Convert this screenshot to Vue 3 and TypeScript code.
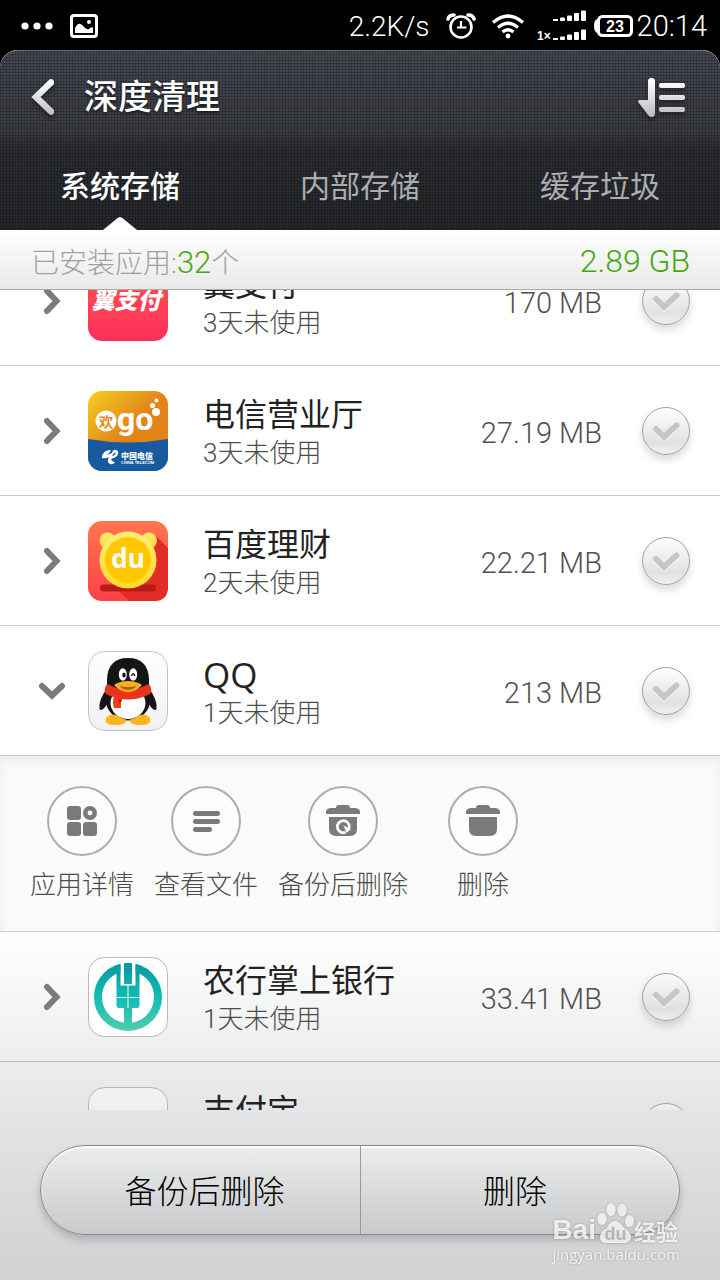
<script setup lang="ts">
import { onMounted, ref } from 'vue'

interface AppEntry {
  id: string
  name: string
  idle: string
  size: string
  open: boolean
  selected: boolean
}

const tabs = ['系统存储', '内部存储', '缓存垃圾']
const activeTab = ref(0)

const apps = ref<AppEntry[]>([
  { id: 'yipay', name: '翼支付', idle: '3天未使用', size: '170 MB', open: false, selected: false },
  { id: 'telecom', name: '电信营业厅', idle: '3天未使用', size: '27.19 MB', open: false, selected: false },
  { id: 'licai', name: '百度理财', idle: '2天未使用', size: '22.21 MB', open: false, selected: false },
  { id: 'qq', name: 'QQ', idle: '1天未使用', size: '213 MB', open: true, selected: false },
  { id: 'abc', name: '农行掌上银行', idle: '1天未使用', size: '33.41 MB', open: false, selected: false },
  { id: 'alipay', name: '支付宝', idle: '', size: '', open: false, selected: false },
])

const actions = [
  { id: 'details', label: '应用详情' },
  { id: 'files', label: '查看文件' },
  { id: 'backup', label: '备份后删除' },
  { id: 'remove', label: '删除' },
]

const list = ref<HTMLElement | null>(null)

const isLatin = (text: string) => /^[A-Za-z]+$/.test(text)

onMounted(() => {
  if (list.value) list.value.scrollTop = 54
})
</script>

<template>
  <div class="screen">
    <div class="status">
      <svg class="dots" width="34" height="10" viewBox="0 0 34 10" fill="#fff">
        <circle cx="5" cy="5" r="3.6" /><circle cx="17" cy="5" r="3.6" /><circle cx="29" cy="5" r="3.6" />
      </svg>
      <svg class="photo" width="28" height="24" viewBox="0 0 28 24">
        <rect x="1.5" y="1.5" width="25" height="21" rx="2.5" fill="none" stroke="#fff" stroke-width="3" />
        <path d="M5 19V14Q9 6 14 13Q17 16 19 15Q21 12.500 23 13.500V19Z" fill="#fff" />
        <circle cx="19" cy="8" r="2" fill="#fff" />
      </svg>
      <span class="speed">2.2K/s</span>
      <svg class="alarm" width="30" height="26" viewBox="0 0 30 26" fill="none" stroke="#fff">
        <circle cx="15" cy="14" r="10.500" stroke-width="2.600" />
        <path d="M15 8V14.500H20.500M11 14.500H15" stroke-width="2.200" />
        <path d="M2 6Q3 2 8 2M22 2Q27 2 28 6" stroke-width="3.600" stroke-linecap="round" />
      </svg>
      <svg class="wifi" width="34" height="26" viewBox="0 0 34 26" fill="none" stroke="#fff" stroke-width="3.400">
        <path d="M2 9.500Q17 -3.500 32 9.500" /><path d="M7 14.500Q17 6 27 14.500" /><path d="M11.500 19Q17 14.500 22.500 19" />
        <circle cx="17" cy="23" r="2.400" fill="#fff" stroke="none" />
      </svg>
      <svg class="signal" width="50" height="32" viewBox="0 0 50 32" fill="#fff">
        <text x="0" y="30" class="onex">1×</text>
        <g id="bars">
          <rect x="16" y="9" width="5" height="2" /><rect x="23" y="7.500" width="5" height="3.500" rx="1" />
          <rect x="30" y="5.500" width="5" height="5.500" rx="1" /><rect x="37" y="3" width="5" height="8" rx="1" />
          <rect x="44" y="0.500" width="5" height="10.500" rx="1" />
        </g>
        <use href="#bars" y="19" />
      </svg>
      <svg class="battery" width="39" height="22" viewBox="0 0 39 22">
        <path d="M4 4Q0 4 0 11T4 18Z" fill="#fff" />
        <rect x="4.500" y="1.500" width="33" height="19" rx="4" fill="none" stroke="#fff" stroke-width="3" />
        <text x="21" y="16.500" text-anchor="middle" class="level">23</text>
      </svg>
      <span class="clock">20:14</span>
    </div>

    <header class="header">
      <div class="titlebar">
        <button class="icon-btn" type="button" aria-label="返回">
          <svg width="24" height="38" viewBox="0 0 24 38">
            <defs>
              <linearGradient id="metal" x1="0" y1="0" x2="0" y2="38" gradientUnits="userSpaceOnUse">
                <stop offset="0.1" stop-color="#fff" /><stop offset="1" stop-color="#bcbdc0" />
              </linearGradient>
            </defs>
            <path d="M21 4.500L6 19L21 33.500" fill="none" stroke="url(#metal)" stroke-width="6.500" stroke-linecap="round" />
          </svg>
        </button>
        <h1>深度清理</h1>
        <button class="icon-btn sort" type="button" aria-label="排序">
          <svg width="48" height="40" viewBox="0 0 48 40" fill="url(#metal)">
            <path d="M10 4Q10 1 13.500 1T17 4V36Q17 40 13.500 40Q11.500 40 10 38L0.500 25.500Q-0.500 23 2 23H10Z" />
            <rect x="21" y="6" width="26" height="5" rx="2" /><rect x="21" y="18" width="26" height="5" rx="2" />
            <rect x="21" y="30" width="26" height="5" rx="2" />
          </svg>
        </button>
      </div>
      <nav class="tabs">
        <button
          v-for="(tab, i) in tabs"
          :key="tab"
          type="button"
          class="tab"
          :class="{ active: i === activeTab }"
          @click="activeTab = i"
        >{{ tab }}</button>
      </nav>
    </header>

    <div class="summary">
      <span>已安装应用:<b>32</b>个</span>
      <b class="total">2.89 GB</b>
    </div>

    <ul ref="list" class="list">
      <li v-for="app in apps" :key="app.id">
        <div class="row">
          <button class="expand" type="button" :aria-label="'展开' + app.name" :aria-expanded="app.open" @click="app.open = !app.open">
            <svg v-if="app.open" width="28" height="28" viewBox="0 0 28 28"><path d="M4 9L14 18.500L24 9" class="chev" /></svg>
            <svg v-else width="28" height="28" viewBox="0 0 28 28"><path d="M9 4L18.500 14L9 24" class="chev" /></svg>
          </button>

          <svg class="app-icon" width="80" height="80" viewBox="0 0 80 80">
            <g v-if="app.id === 'yipay'">
              <linearGradient id="yi" x2="0" y2="1"><stop stop-color="#ff5a4c" /><stop offset="1" stop-color="#ff2f5c" /></linearGradient>
              <rect width="80" height="80" rx="14" fill="url(#yi)" />
              <text x="38" y="48" text-anchor="middle" class="yi-text">翼支付</text>
            </g>
            <g v-else-if="app.id === 'telecom'">
              <linearGradient id="tel" x2="0.5" y2="0.5"><stop stop-color="#f6cf20" /><stop offset="1" stop-color="#e38418" /></linearGradient>
              <clipPath id="round"><rect width="80" height="80" rx="14" /></clipPath>
              <g clip-path="url(#round)">
                <rect width="80" height="80" fill="url(#tel)" />
                <path d="M0 48Q40 55 80 48V80H0Z" fill="#175a9f" />
              </g>
              <circle cx="18" cy="30" r="10.500" fill="#fff" />
              <text x="18" y="35.500" text-anchor="middle" class="huan">欢</text>
              <text x="29" y="39" class="go">go</text>
              <g fill="#fff"><circle cx="68" cy="21" r="4" /><circle cx="64.500" cy="14.500" r="2.600" /><circle cx="68.500" cy="9.500" r="2" /></g>
              <path d="M14 67Q14 59 23 59Q22 62 17 65Q20 63 24 62Q25 58 28 59Q32 60 29 65Q27 67 23 68Q24 71 27 71Q25 74 22 73Q18 71 21 66Q17 68 14 67Z" fill="#fff" />
              <path d="M24 65Q28 64 27.500 61.500Q25 62 24 65Z" fill="#175a9f" />
              <text x="33" y="67.500" class="cn">中国电信</text>
              <text x="33" y="73" class="en">CHINA TELECOM</text>
            </g>
            <g v-else-if="app.id === 'licai'">
              <linearGradient id="lc" x2="0" y2="1"><stop stop-color="#ff774e" /><stop offset="1" stop-color="#fd4148" /></linearGradient>
              <linearGradient id="bear" x2="0" y2="1"><stop stop-color="#ffeb78" /><stop offset="1" stop-color="#ffd92a" /></linearGradient>
              <rect width="80" height="80" rx="14" fill="url(#lc)" />
              <path d="M67 14L80 27V66Q80 80 66 80H41L23 62Z" fill="#e32c26" />
              <rect x="12" y="63.500" width="56" height="7" rx="3.500" fill="#b51c17" />
              <g fill="url(#bear)"><circle cx="19.500" cy="19.500" r="8" /><circle cx="61" cy="19.500" r="8" /><circle cx="40" cy="39" r="28.500" /></g>
              <circle cx="40" cy="39" r="23" fill="#ffc800" />
              <text x="40" y="47" text-anchor="middle" class="du">du</text>
            </g>
            <g v-else-if="app.id === 'qq'">
              <linearGradient id="qqbg" x2="0" y2="1"><stop stop-color="#fff" /><stop offset="1" stop-color="#f1f1f2" /></linearGradient>
              <rect x="0.500" y="0.500" width="79" height="79" rx="16" fill="url(#qqbg)" stroke="#c2c2c4" />
              <path d="M20 36Q10 49 11.500 58Q13 61 18 55L22 44ZM60 36Q70 49 68.500 58Q67 61 62 55L58 44Z" fill="#151515" />
              <ellipse cx="40" cy="48" rx="22.500" ry="21.500" fill="#151515" />
              <path d="M19 38V28Q20 7 40 7T61 28V38Z" fill="#151515" />
              <ellipse cx="40" cy="52" rx="17.500" ry="16" fill="#fff" />
              <path d="M18 67Q22 62 28 64Q34 68 39 69Q38 74 27 74Q16 74 18 67ZM62 67Q58 62 52 64Q46 68 41 69Q42 74 53 74Q64 74 62 67Z" fill="#fbb41a" />
              <path d="M19 33Q40 44 61 33Q65 39 62 43Q40 54 18 43Q15 39 19 33Z" fill="#e8351a" />
              <path d="M26 45L34 48Q32 52 33 57L26 57Q24 51 26 45Z" fill="#ef3a1c" /><path d="M30 48L34 49Q32 52 32 54Z" fill="#b32410" />
              <ellipse cx="34.800" cy="23.500" rx="4" ry="6.200" fill="#fff" /><ellipse cx="45.200" cy="23.500" rx="4" ry="6.200" fill="#fff" />
              <ellipse cx="36" cy="24" rx="1.700" ry="2.500" fill="#151515" />
              <path d="M43.500 25Q45 20.500 47 25" fill="none" stroke="#151515" stroke-width="1.300" />
              <path d="M26 34Q32 30 40 30T54 34Q48 41 40 41T26 34Z" fill="#fdb01e" />
              <path d="M31 34.500Q40 38 49 34.500Q45 39 40 39T31 34.500Z" fill="#b05a12" />
            </g>
            <g v-else-if="app.id === 'abc'">
              <linearGradient id="ab" x1="0" y1="6" x2="0" y2="74" gradientUnits="userSpaceOnUse"><stop stop-color="#0b979f" /><stop offset="0.5" stop-color="#10bdb4" /><stop offset="1" stop-color="#4fcbb2" /></linearGradient>
              <rect x="0.500" y="0.500" width="79" height="79" rx="16" fill="#fff" stroke="#b8b8ba" />
              <circle cx="40" cy="40" r="30" fill="none" stroke="url(#ab)" stroke-width="8" />
              <path d="M32.500 4H47.500V30H32.500Z" fill="#fff" />
              <g fill="url(#ab)">
                <rect x="36" y="6" width="8" height="21" rx="1" />
                <path d="M28.500 9L32.500 8V28.500H47.500V8L51.500 9V49Q51.500 51 49 51H44V70H36V51H31Q28.500 51 28.500 49Z" />
              </g>
              <path d="M28.500 40.500H51.500M40 28V51" stroke="#d8f4ef" stroke-width="1.200" />
            </g>
            <rect v-else x="0.500" y="0.500" width="79" height="79" rx="16" fill="#f0f0f1" stroke="#b4b5b8" />
          </svg>

          <div class="info">
            <div class="name" :class="{ latin: isLatin(app.name) }">{{ app.name }}</div>
            <div class="idle">{{ app.idle }}</div>
          </div>
          <span class="size">{{ app.size }}</span>
          <label class="pick">
            <input v-model="app.selected" type="checkbox" :aria-label="'选择' + app.name" />
            <svg width="48" height="48" viewBox="0 0 48 48" fill="none" stroke-width="6" stroke-linecap="round">
              <path d="M14 23L22 31L34.500 19.500" stroke="#fff" />
              <path class="tick" d="M14 22L22 30L34.500 18.500" />
            </svg>
          </label>
        </div>

        <div v-if="app.open" class="panel">
          <button v-for="a in actions" :key="a.id" type="button" class="action">
            <svg class="ring" width="70" height="70" viewBox="0 0 70 70" fill="#7a7a7a">
              <circle cx="35" cy="35" r="34" fill="#fcfcfc" stroke="#adadad" stroke-width="2" />
              <g v-if="a.id === 'details'">
                <rect x="20" y="20" width="14" height="14" rx="3" /><rect x="20" y="36" width="14" height="14" rx="3" />
                <rect x="36" y="36" width="14" height="14" rx="3" />
                <circle cx="43" cy="27" r="4.700" fill="none" stroke="#7a7a7a" stroke-width="4.600" />
              </g>
              <g v-else-if="a.id === 'files'">
                <rect x="22" y="25" width="27" height="5" rx="2.500" /><rect x="22" y="33" width="27" height="5" rx="2.500" />
                <rect x="22" y="41" width="19" height="5" rx="2.500" />
              </g>
              <g v-else>
                <path d="M18 28V25.500Q19 22 23 22H28Q28 19 31 19H39Q42 19 42 22H47Q51 22 52 25.500V28Z" />
                <path d="M21 31H49V43Q49 50 42 50H28Q21 50 21 43Z" />
                <g v-if="a.id === 'backup'">
                  <path d="M37.500 46.300A6 6 0 1 1 41.200 42" fill="none" stroke="#fcfcfc" stroke-width="2.800" />
                  <path d="M35.500 39.500L43 43L38.500 47Z" fill="#fcfcfc" />
                </g>
              </g>
            </svg>
            <span>{{ a.label }}</span>
          </button>
        </div>
      </li>
    </ul>

    <footer class="footer">
      <div class="bar">
        <button type="button">备份后删除</button>
        <button type="button">删除</button>
      </div>
      <div class="mark">
        <div class="brand">
          <span>Bai</span>
          <svg width="38" height="42" viewBox="0 0 38 42">
            <g fill="currentColor">
              <ellipse cx="6" cy="17" rx="4.500" ry="6" /><ellipse cx="15" cy="7.500" rx="4.500" ry="6.500" />
              <ellipse cx="26" cy="8" rx="4.500" ry="6.500" /><ellipse cx="33.500" cy="19" rx="4.500" ry="6" />
              <path d="M19 19Q24 19 28 26Q36 31 35 36Q33 42 26 41H12Q4 42 4 35Q4 30 11 26Q14 19 19 19Z" />
            </g>
            <text x="19.500" y="38" text-anchor="middle" class="paw-text">du</text>
          </svg>
          <span class="jy">经验</span>
        </div>
        <div class="url">jingyan.baidu.com</div>
      </div>
    </footer>
  </div>
</template>

<style>
html,
body {
  background: #000;
}
</style>

<style scoped>
* {
  box-sizing: border-box;
}
.screen {
  height: 100vh;
  display: flex;
  flex-direction: column;
  overflow: hidden;
  font-family: Roboto, "Noto Sans CJK SC", sans-serif;
  font-weight: 300;
  background: linear-gradient(to bottom, #fff calc(100% - 348px), #eceded calc(100% - 218px), #e4e5e7 calc(100% - 170px), #d0d1d3 100%);
}
button {
  border: 0;
  padding: 0;
  margin: 0;
  background: none;
  color: inherit;
  font: inherit;
  cursor: pointer;
}
svg {
  display: block;
  flex: none;
}
.status {
  flex: none;
  height: 50px;
  padding: 2px 13px 0 20px;
  display: flex;
  align-items: center;
  background: #000;
  color: #fff;
  font-size: 28px;
}
.clock {
  font-size: 29px;
}
.photo {
  margin-left: 16px;
}
.speed {
  margin-left: auto;
}
.alarm {
  margin-left: 16px;
}
.wifi {
  margin-left: 15px;
}
.signal {
  margin-left: 12px;
}
.battery {
  margin: 0 4px 0 7px;
}
.onex {
  font: 700 12px "Liberation Sans", sans-serif;
}
.level {
  font: 700 16px "Liberation Sans", sans-serif;
  fill: #fff;
}
.header {
  flex: none;
  color: #fff;
  border-top: 1px solid #6c6f75;
  border-radius: 18px 18px 0 0;
  background:
    repeating-linear-gradient(to right, rgba(0, 0, 0, 0.2) 0 1px, transparent 1px 3px),
    repeating-linear-gradient(to bottom, rgba(0, 0, 0, 0.2) 0 1px, transparent 1px 3px),
    linear-gradient(#43474f, #393c42 45%, #2b2d32 55%, #25272c);
  box-shadow: 0 -20px 0 20px #000;
  clip-path: inset(0);
}
.titlebar {
  height: 90px;
  padding: 2px 34px 0 30px;
  display: flex;
  align-items: center;
}
.icon-btn {
  filter: drop-shadow(0 3px 2px rgba(0, 0, 0, 0.4));
}
.sort {
  margin-left: auto;
}
h1 {
  margin: 0 0 0 30px;
  font-size: 34px;
  line-height: 48px;
  font-weight: 500;
  text-shadow: 0 2px 3px rgba(0, 0, 0, 0.5);
}
.tabs {
  display: grid;
  grid-template-columns: repeat(3, 1fr);
  height: 89px;
}
.tab {
  position: relative;
  padding-bottom: 4px;
  font-size: 30px;
  font-weight: 400;
  color: #acadaf;
}
.tab.active {
  color: #fff;
  font-weight: 500;
}
.tab.active::after {
  content: "";
  position: absolute;
  left: calc(50% - 17px);
  bottom: 0;
  width: 34px;
  height: 13px;
  background: #fff;
  clip-path: polygon(0 100%, 44% 6%, 50% 0, 56% 6%, 100% 100%);
}
.summary {
  flex: none;
  height: 60px;
  padding: 2px 30px 0 31px;
  display: flex;
  align-items: center;
  justify-content: space-between;
  font-size: 28px;
  color: #a0a0a0;
  border-bottom: 1px solid #a9a9a9;
  background: linear-gradient(#fff, #e9e9e9);
}
.summary b {
  font-weight: 300;
  font-size: 31px;
  color: #43a90d;
}
.summary .total {
  font-size: 32px;
}
.list {
  flex: 1;
  min-height: 0;
  margin: 0;
  padding: 0;
  list-style: none;
  overflow-y: auto;
  scrollbar-width: none;
}
.row {
  height: 130px;
  padding: 0 30px 0 28px;
  display: flex;
  align-items: center;
  border-bottom: 1px solid rgba(60, 60, 60, 0.28);
}
.expand {
  width: 48px;
  height: 48px;
  display: grid;
  place-items: center;
}
.chev {
  fill: none;
  stroke: #7b7b7b;
  stroke-width: 6;
  stroke-linecap: round;
}
.app-icon {
  margin: 0 35px 0 12px;
}
.info {
  flex: 1;
  min-width: 0;
  padding-top: 4px;
}
.name {
  height: 40px;
  font-size: 32px;
  line-height: 40px;
  font-weight: 400;
  color: #222;
}
.name.latin {
  font-family: "Open Sans", sans-serif;
  font-size: 35px;
}
.idle {
  height: 36px;
  font-size: 26px;
  line-height: 36px;
  color: #4c4c4c;
}
.size {
  padding-top: 4px;
  font-size: 29px;
  color: #505050;
}
.pick {
  display: grid;
  margin-left: 40px;
  cursor: pointer;
}
.pick > * {
  grid-area: 1 / 1;
}
.pick input {
  appearance: none;
  width: 48px;
  height: 48px;
  margin: 0;
  border: 1px solid #a2a2a2;
  border-radius: 50%;
  background: linear-gradient(rgba(255, 255, 255, 0.4), rgba(222, 222, 222, 0.9) 75%, rgba(238, 238, 238, 0.9));
  box-shadow: 0 5px 8px rgba(0, 0, 0, 0.15);
}
.pick svg {
  pointer-events: none;
}
.tick {
  stroke: #c6c6c6;
}
.pick input:checked + svg .tick {
  stroke: #43a90d;
}
.panel {
  height: 176px;
  padding: 30px 30px 0;
  display: grid;
  grid-template-columns: 104px 104px 130px 110px;
  gap: 20px;
  align-items: start;
  background: #fafafa;
  border-bottom: 1px solid #cfcfcf;
  box-shadow: inset 0 4px 8px rgba(0, 0, 0, 0.07);
}
.action {
  display: flex;
  flex-direction: column;
  align-items: center;
  gap: 11px;
  font-size: 26px;
  line-height: 36px;
  color: #4c4c4c;
  white-space: nowrap;
}
.footer {
  flex: none;
  position: relative;
  padding: 35px 40px 45px;
}
.bar {
  height: 90px;
  display: grid;
  grid-template-columns: 1fr 1fr;
  border: 1px solid #88898c;
  border-radius: 45px;
  background: linear-gradient(#ebeceb, #c9cacc);
  box-shadow: inset 0 2px 1px #fff, 0 5px 8px rgba(0, 0, 0, 0.18);
}
.bar button {
  padding: 0 0 3px 8px;
  font-size: 32px;
  color: #000;
}
.bar button + button {
  padding: 0 10px 3px 0;
  border-left: 1px solid #98999b;
}
.mark {
  position: absolute;
  right: 40px;
  bottom: 16px;
  color: rgba(255, 255, 255, 0.8);
  filter: drop-shadow(0 0 1px rgba(0, 0, 0, 0.3));
  pointer-events: none;
}
.brand {
  display: flex;
  align-items: flex-end;
  font: 700 28px/28px "Liberation Sans", sans-serif;
}
.jy {
  font: 700 22px/28px "Noto Sans CJK SC", sans-serif;
}
.paw-text {
  font: 700 18px "Liberation Sans", sans-serif;
  fill: #b4b5b7;
}
.url {
  font: 400 15px/20px "Open Sans", sans-serif;
}
.yi-text {
  font: italic 900 23px "Noto Sans CJK SC", sans-serif;
  fill: #fff;
}
.huan {
  font: 700 14px "Noto Sans CJK SC", sans-serif;
  fill: #df8a1b;
}
.go {
  font: 700 32px Roboto, sans-serif;
  fill: #fff;
}
.cn {
  font: 900 8px "Noto Sans CJK SC", sans-serif;
  fill: #fff;
}
.en {
  font: 700 4px "Liberation Sans", sans-serif;
  fill: #fff;
}
.du {
  font: 700 26px "Open Sans", sans-serif;
  fill: #fff;
}
</style>
